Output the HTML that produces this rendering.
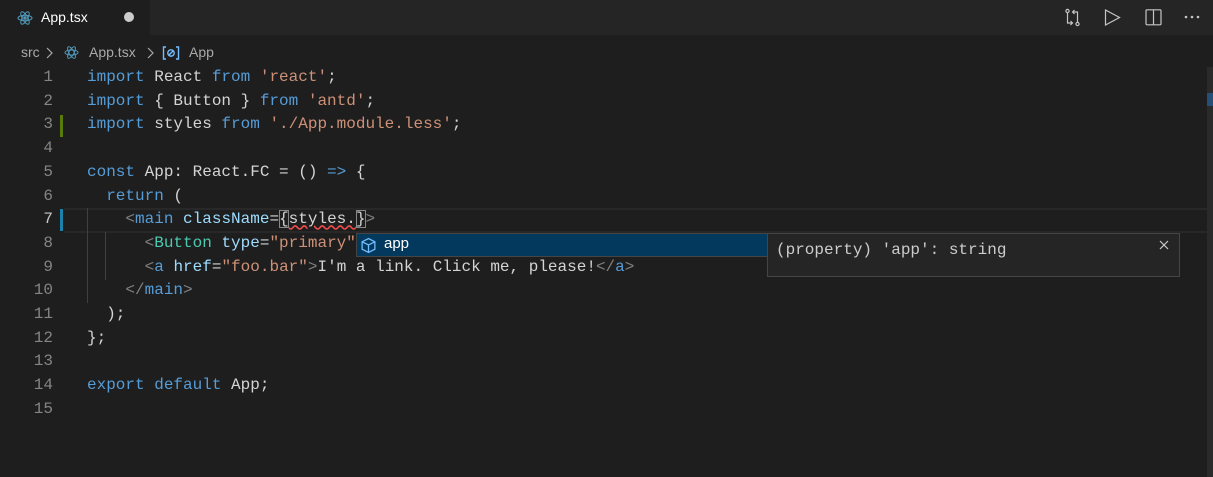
<!DOCTYPE html>
<html><head><style>
*{margin:0;padding:0;box-sizing:border-box}
body{width:1213px;height:477px;background:#1e1e1e;overflow:hidden;position:relative;font-family:"Liberation Sans",sans-serif;}
.tabbar{position:absolute;left:0;top:0;width:1213px;height:35px;background:#252526}
.tab{position:absolute;left:0;top:0;width:150px;height:35px;background:#1e1e1e;color:#fff;font-size:14px}
.cr{position:absolute;top:44px;font-size:14px;color:#a9a9a9;white-space:nowrap}
.code{position:absolute;left:0;top:66px;font-family:"Liberation Mono",monospace;font-size:16px}
.ln{position:absolute;left:0;width:53px;text-align:right;color:#858585;height:23.7px;line-height:23.7px}
.l{position:absolute;left:87px;white-space:pre;color:#d4d4d4;height:23.7px;line-height:23.7px}
.k{color:#569cd6}.s{color:#ce9178}.v{color:#9cdcfe}.t{color:#4ec9b0}.g{color:#808080}.c{color:#c586c0}
</style></head><body>
<div class="tabbar"></div>
<div class="tab">
<svg style="position:absolute;left:17px;top:10px" width="16" height="16" viewBox="0 0 16 16" fill="none" stroke="#519aba" stroke-width="1"><ellipse cx="8" cy="8" rx="7" ry="2.7"/><ellipse cx="8" cy="8" rx="7" ry="2.7" transform="rotate(60 8 8)"/><ellipse cx="8" cy="8" rx="7" ry="2.7" transform="rotate(120 8 8)"/><circle cx="8" cy="8" r="1.2" fill="#519aba"/></svg>
<span style="position:absolute;left:41px;top:9px">App.tsx</span>
<div style="position:absolute;left:124px;top:12px;width:10px;height:10px;border-radius:50%;background:#ccc"></div>
</div>
<svg style="position:absolute;left:1064px;top:8px" width="18" height="20" viewBox="0 0 18 20" fill="none" stroke="#c5c5c5" stroke-width="1.2"><circle cx="3.5" cy="3" r="1.6"/><path d="M3.5 5v10h5M6.5 13l2 2-2 2"/><circle cx="13.5" cy="16" r="1.6"/><path d="M13.5 14V4h-5M10.5 2l-2 2 2 2"/></svg>
<svg style="position:absolute;left:1104px;top:9px" width="18" height="18" viewBox="0 0 18 18" fill="none" stroke="#c5c5c5" stroke-width="1.2"><path d="M1.5 1l14 7.5-14 7.5z"/></svg>
<svg style="position:absolute;left:1145px;top:9px" width="18" height="18" viewBox="0 0 18 18" fill="none" stroke="#c5c5c5" stroke-width="1.2"><rect x="1" y="0.8" width="15" height="15" rx="1"/><path d="M8.5 1v15"/></svg>
<svg style="position:absolute;left:1184px;top:14px" width="16" height="6" viewBox="0 0 16 6" fill="#c5c5c5"><circle cx="2" cy="3" r="1.3"/><circle cx="8" cy="3" r="1.3"/><circle cx="14" cy="3" r="1.3"/></svg>
<div class="cr" style="left:21px">src</div>
<svg style="position:absolute;left:45px;top:47px" width="8" height="12" viewBox="0 0 8 12" fill="none" stroke="#a9a9a9" stroke-width="1.2"><path d="M2 1l5 5-5 5"/></svg>
<svg style="position:absolute;left:64px;top:45px" width="15" height="15" viewBox="0 0 16 16" fill="none" stroke="#519aba" stroke-width="1"><ellipse cx="8" cy="8" rx="7" ry="2.7"/><ellipse cx="8" cy="8" rx="7" ry="2.7" transform="rotate(60 8 8)"/><ellipse cx="8" cy="8" rx="7" ry="2.7" transform="rotate(120 8 8)"/></svg>
<div class="cr" style="left:89px">App.tsx</div>
<svg style="position:absolute;left:146px;top:47px" width="8" height="12" viewBox="0 0 8 12" fill="none" stroke="#a9a9a9" stroke-width="1.2"><path d="M2 1l5 5-5 5"/></svg>
<svg style="position:absolute;left:162px;top:46px" width="18" height="14" viewBox="0 0 18 14" fill="none" stroke="#75beff" stroke-width="1.4"><path d="M4 1H1.5v12H4M14 1h2.5v12H14"/><circle cx="9" cy="7" r="3.2"/><path d="M6.8 9.2l4.4-4.4"/></svg>
<div class="cr" style="left:189px">App</div>
<div style="position:absolute;left:60px;top:115px;width:3px;height:22px;background:#587c0c"></div>
<div style="position:absolute;left:60px;top:209px;width:3px;height:22px;background:#1b81a8"></div>
<div style="position:absolute;left:64px;top:208px;width:1149px;height:25px;border-top:2px solid #282828;border-bottom:2px solid #282828"></div>
<div style="position:absolute;left:87px;top:208px;width:1px;height:95px;background:#404040"></div>
<div style="position:absolute;left:105px;top:232px;width:1px;height:48px;background:#404040"></div>
<div style="position:absolute;left:1207px;top:67px;width:6px;height:410px;background:#2a2a2a"></div>
<div style="position:absolute;left:1207px;top:93px;width:6px;height:13px;background:#264f78"></div>
<div class="code">
<div class="ln" style="top:0">1</div><div class="ln" style="top:23.7px">2</div><div class="ln" style="top:47.4px">3</div><div class="ln" style="top:71.1px">4</div><div class="ln" style="top:94.8px">5</div><div class="ln" style="top:118.5px">6</div><div class="ln" style="top:142.2px;color:#c6c6c6">7</div><div class="ln" style="top:165.9px">8</div><div class="ln" style="top:189.6px">9</div><div class="ln" style="top:213.3px">10</div><div class="ln" style="top:237px">11</div><div class="ln" style="top:260.7px">12</div><div class="ln" style="top:284.4px">13</div><div class="ln" style="top:308.1px">14</div><div class="ln" style="top:331.8px">15</div>
<div class="l" style="top:0"><span class="k">import</span> React <span class="k">from</span> <span class="s">'react'</span>;</div>
<div class="l" style="top:23.7px"><span class="k">import</span> { Button } <span class="k">from</span> <span class="s">'antd'</span>;</div>
<div class="l" style="top:47.4px"><span class="k">import</span> styles <span class="k">from</span> <span class="s">'./App.module.less'</span>;</div>
<div class="l" style="top:94.8px"><span class="k">const</span> App: React.FC = () <span class="k">=&gt;</span> {</div>
<div class="l" style="top:118.5px">  <span class="k">return</span> (</div>
<div class="l" style="top:142.2px">    <span class="g">&lt;</span><span class="k">main</span> <span class="v">className</span>=<span style="outline:1px solid #888;outline-offset:-1px">{</span><span style="text-decoration:underline wavy #f14c4c">styles.</span><span style="outline:1px solid #888;outline-offset:-1px">}</span><span class="g">&gt;</span></div>
<div class="l" style="top:165.9px">      <span class="g">&lt;</span><span class="t">Button</span> <span class="v">type</span>=<span class="s">"primary"</span></div>
<div class="l" style="top:189.6px">      <span class="g">&lt;</span><span class="k">a</span> <span class="v">href</span>=<span class="s">"foo.bar"</span><span class="g">&gt;</span>I'm a link. Click me, please!<span class="g">&lt;/</span><span class="k">a</span><span class="g">&gt;</span></div>
<div class="l" style="top:213.3px">    <span class="g">&lt;/</span><span class="k">main</span><span class="g">&gt;</span></div>
<div class="l" style="top:237px">  );</div>
<div class="l" style="top:260.7px">};</div>
<div class="l" style="top:308.1px"><span class="k">export</span> <span class="k">default</span> App;</div>
</div>
<div style="position:absolute;left:356px;top:233px;width:412px;height:24px;background:#252526;border:1px solid #454545"></div>
<div style="position:absolute;left:357px;top:234px;width:410px;height:22px;background:#04395e"></div>
<svg style="position:absolute;left:360px;top:237px" width="17" height="17" viewBox="0 0 16 16" fill="none" stroke="#75beff" stroke-width="1.2"><path d="M8 1.5l6 3v7l-6 3-6-3v-7z M2 4.5l6 3 6-3 M8 7.5v7"/></svg>
<div style="position:absolute;left:384px;top:235px;color:#fff;font-size:15px">app</div>
<div style="position:absolute;left:767px;top:233px;width:413px;height:44px;background:#252526;border:1px solid #454545"></div>
<div style="position:absolute;left:776px;top:238px;color:#cccccc;font-family:'Liberation Mono',monospace;font-size:16px;line-height:24px">(property) 'app': string</div>
<svg style="position:absolute;left:1159px;top:240px" width="10" height="10" viewBox="0 0 10 10" stroke="#ccc" stroke-width="1.2"><path d="M1 1l8 8M9 1l-8 8"/></svg>
</body></html>
